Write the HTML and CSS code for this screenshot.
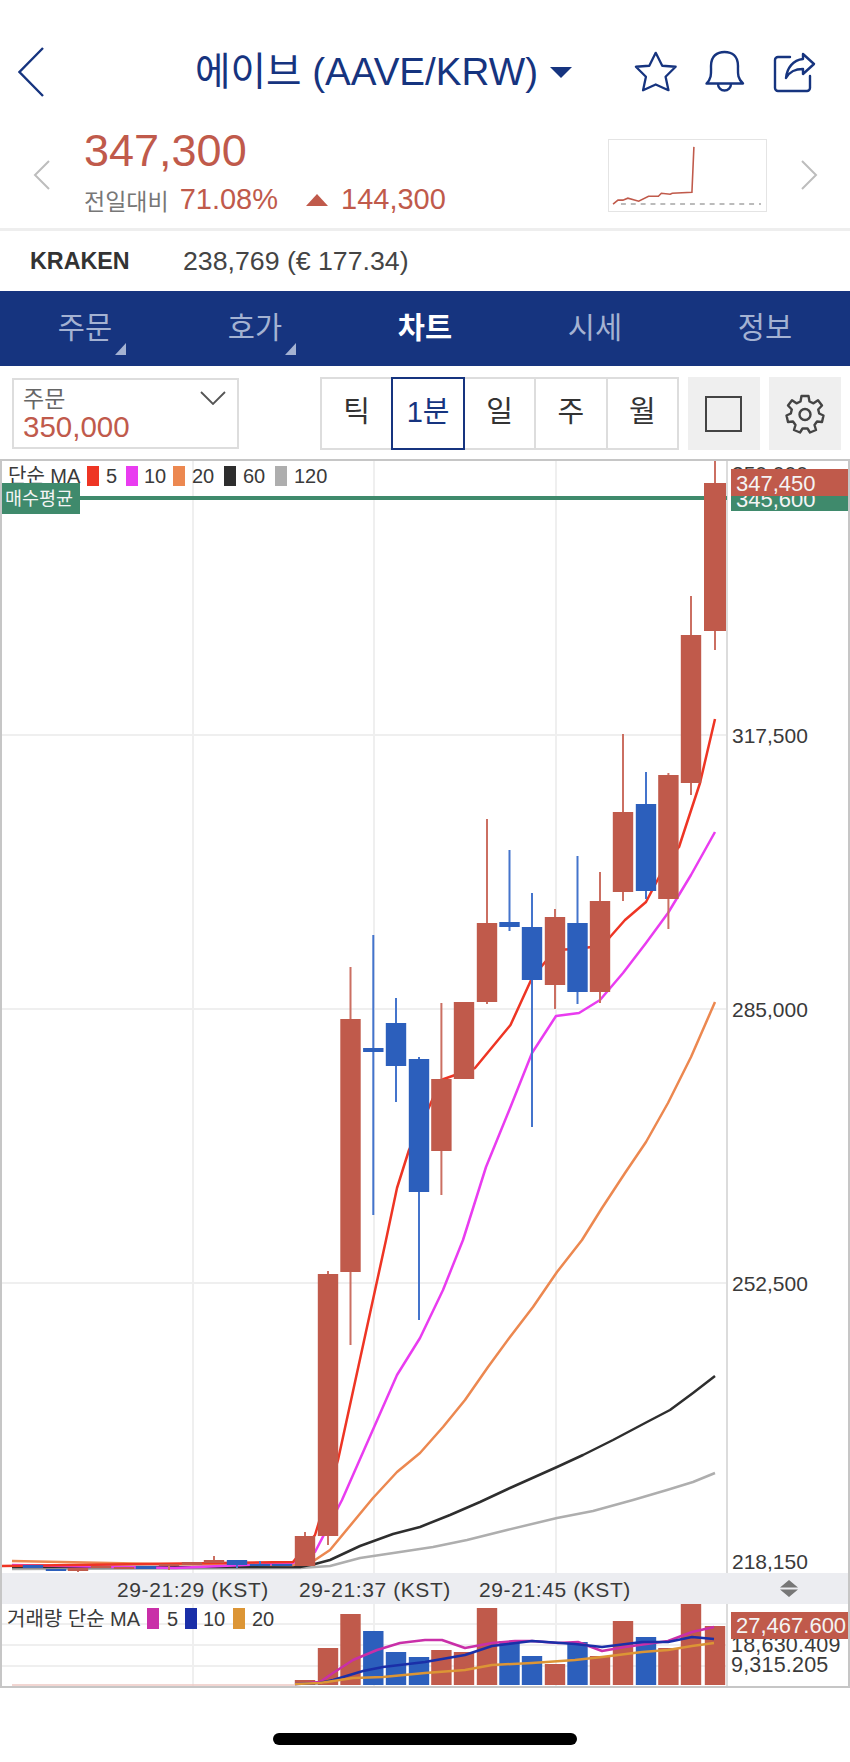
FILE: index.html
```html
<!DOCTYPE html>
<html lang="ko">
<head>
  <meta charset="UTF-8" />
  <meta name="viewport" content="width=device-width, initial-scale=1.0"/>
  <title>에이브 (AAVE/KRW)</title>
  <link rel="stylesheet" href="styles.css">
</head>
<body>
  <header class="top-bar">
    <svg class="back" viewBox="0 0 26 50"><path d="M25 1 L1.5 25 L25 49" /></svg>
    <h1 class="coin-title">에이브 (AAVE/KRW)</h1>
    <span class="title-caret"></span>
    <div class="top-icons">
      <svg class="top-icon" viewBox="8 8 48 44"><path d="M31.7 10 L38.5 23.5 L52.5 24.5 L42 35 L45 49 L31.7 43 L18.5 49 L21.5 35 L11 24.5 L25 23.5 Z" /></svg>
      <svg class="top-icon" viewBox="80 8 46 46"><path d="M84.5 42.5 C90 37 89 32 89 25 C89 15 95 11 102.5 11 C110 11 116 15 116 25 C116 32 115 37 121 42.5 Z M96 43 a6.5 6.5 0 0 0 13 0" /></svg>
      <svg class="top-icon" viewBox="146 8 46 46"><path d="M165 16 H153 a3 3 0 0 0 -3 3 V47 a3 3 0 0 0 3 3 H182 a3 3 0 0 0 3 -3 V35 M178 13 L189 23 L178 33 V28 C170 28 165 30 161 37 C162 27 168 19 178 18 Z" /></svg>
    </div>
  </header>

  <section class="quote">
    <svg class="side-arrow" viewBox="0 0 18 30"><path d="M16 1 L2 15 L16 29" /></svg>
    <div class="quote-main">
      <div class="quote-price">347,300</div>
      <div class="quote-change">
        <span class="change-label">전일대비</span>
        <span class="change-rate">71.08%</span>
        <span class="change-up"></span>
        <span class="change-diff">144,300</span>
      </div>
    </div>
    <svg class="spark" viewBox="608 139 159 72">
      <line class="spark-base" x1="620" y1="204" x2="762" y2="204" />
      <polyline class="spark-line" points="612,204 617,200 622,200 627,198 638,201 648,196 658,196 661,193 670,194 672,193 692,192 694,146" />
    </svg>
    <svg class="side-arrow side-arrow-right" viewBox="0 0 18 30"><path d="M2 1 L16 15 L2 29" /></svg>
  </section>

  <section class="exchange">
    <span class="exchange-name">KRAKEN</span>
    <span class="exchange-price">238,769 (€ 177.34)</span>
  </section>

  <nav class="tabs">
    <div class="tab tab-more">주문</div>
    <div class="tab tab-more">호가</div>
    <div class="tab tab-on">차트</div>
    <div class="tab">시세</div>
    <div class="tab">정보</div>
  </nav>

  <section class="toolbar">
    <div class="order-box">
      <div class="order-head">
        <span class="order-label">주문</span>
        <svg class="order-arrow" viewBox="0 0 26 14"><path d="M1 1 L13 13 L25 1" /></svg>
      </div>
      <div class="order-value">350,000</div>
    </div>
    <div class="periods">
      <div class="period">틱</div>
      <div class="period period-on">1분</div>
      <div class="period">일</div>
      <div class="period">주</div>
      <div class="period">월</div>
    </div>
    <div class="tool-btn"><span class="tool-square"></span></div>
    <div class="tool-btn">
      <svg class="tool-gear" viewBox="0 0 40 40">
        <path d="M16.5 2 H23.5 L24.5 7.5 L28.5 9.3 L33 6.2 L37 11.5 L33.2 15.5 L34.2 19.5 L38.5 21.5 L37 28 L32 27.5 L29.5 31 L31 36 L25 38.5 L22.5 34.5 H17.5 L15 38.5 L9 36 L10.5 31 L8 27.5 L3 28 L1.5 21.5 L5.8 19.5 L6.8 15.5 L3 11.5 L7 6.2 L11.5 9.3 L15.5 7.5 Z" />
        <circle cx="20" cy="20.5" r="5.5" />
      </svg>
    </div>
  </section>

  <div class="chart-box">
    <svg id="chart" class="chart" viewBox="2 461 846 1225"></svg>
  </div>

  <div class="home-wrap"><div class="home-bar"></div></div>

  <script src="chart.js"></script>
</body>
</html>
```

FILE: styles.css
```css
body {
  margin: 0;
  background: #fff;
  font-family: "Liberation Sans", "Noto Sans CJK KR", sans-serif;
  color: #333;
}

/* top bar */
.top-bar {
  display: flex;
  align-items: center;
  height: 64px;
  margin-top: 40px;
  padding-left: 18px;
  color: #16347f;
}
.back {
  width: 26px;
  height: 50px;
  fill: none;
  stroke: #16347f;
  stroke-width: 2.4;
}
.coin-title {
  margin: 0 0 0 151px;
  font-size: 38.6px;
  font-weight: normal;
  line-height: 48px;
  white-space: nowrap;
}
.title-caret {
  width: 0;
  height: 0;
  margin-left: 12px;
  border-left: 11px solid transparent;
  border-right: 11px solid transparent;
  border-top: 11px solid #16347f;
}
.top-icons {
  display: flex;
  gap: 23px;
  margin-left: auto;
  padding-right: 33px;
}
.top-icon {
  width: 46px;
  height: 46px;
  fill: none;
  stroke: #16347f;
  stroke-width: 2.4;
  stroke-linejoin: round;
  stroke-linecap: round;
}

/* price block */
.quote {
  display: flex;
  align-items: center;
  height: 106px;
  padding: 18px 32px 0 0;
}
.side-arrow {
  width: 18px;
  height: 30px;
  margin-left: 33px;
  fill: none;
  stroke: #bdbdbd;
  stroke-width: 2;
}
.quote-main {
  margin-left: 33px;
  margin-top: -9px;
}
.quote-price {
  font-size: 45px;
  line-height: 52px;
  color: #c05a4b;
}
.quote-change {
  display: flex;
  align-items: center;
  height: 34px;
  margin-top: 6px;
  color: #c05a4b;
  font-size: 29px;
}
.change-label {
  font-size: 23px;
  color: #777;
}
.change-rate {
  margin-left: 11px;
}
.change-up {
  width: 0;
  height: 0;
  margin-left: 28px;
  border-left: 11.5px solid transparent;
  border-right: 11.5px solid transparent;
  border-bottom: 12px solid #c05a4b;
}
.change-diff {
  margin-left: 13px;
}
.spark {
  box-sizing: border-box;
  width: 159px;
  height: 73px;
  margin-left: auto;
  border: 1.5px solid #e4e4e4;
}
.spark-base {
  stroke: #bbb;
  stroke-width: 2;
  stroke-dasharray: 5 5;
}
.spark-line {
  fill: none;
  stroke: #c05a4b;
  stroke-width: 1.6;
}

/* exchange row */
.exchange {
  display: flex;
  align-items: center;
  height: 60px;
  padding-left: 30px;
  border-top: 3px solid #eee;
}
.exchange-name {
  width: 153px;
  font-size: 23.3px;
  font-weight: bold;
}
.exchange-price {
  font-size: 26.7px;
  color: #444;
}

/* tabs */
.tabs {
  display: flex;
  height: 75px;
  background: #16347f;
}
.tab {
  position: relative;
  flex: 1;
  font-size: 29.5px;
  line-height: 74px;
  text-align: center;
  color: #a4b2d2;
}
.tab-on {
  font-weight: bold;
  color: #fff;
}
.tab-more::after {
  content: "";
  position: absolute;
  left: 115px;
  top: 52px;
  width: 0;
  height: 0;
  border-left: 11px solid transparent;
  border-bottom: 12px solid #a4b2d2;
}

/* toolbar */
.toolbar {
  display: flex;
  align-items: flex-start;
  height: 82px;
  padding: 11px 9px 0 12px;
}
.order-box {
  flex: none;
  box-sizing: border-box;
  width: 227px;
  height: 71px;
  margin-top: 1px;
  padding: 6px 9px;
  border: 2px solid #ddd;
}
.order-head {
  display: flex;
  justify-content: space-between;
  align-items: flex-start;
}
.order-label {
  font-size: 23px;
  line-height: 26px;
  color: #666;
}
.order-arrow {
  width: 26px;
  height: 14px;
  margin: 5px 2px 0 0;
  fill: none;
  stroke: #555;
  stroke-width: 1.8;
}
.order-value {
  font-size: 29.5px;
  line-height: 30px;
  color: #c05a4b;
}
.periods {
  display: flex;
  flex: none;
  margin-left: 83px;
}
.period {
  flex: none;
  box-sizing: border-box;
  width: 73.4px;
  height: 73px;
  margin-left: -2px;
  border: 2px solid #ddd;
  font-size: 29px;
  line-height: 67px;
  text-align: center;
  color: #333;
}
.period-on {
  position: relative;
  border-color: #16347f;
  color: #16347f;
}
.tool-btn {
  display: flex;
  flex: none;
  align-items: center;
  justify-content: center;
  width: 72px;
  height: 73px;
  margin-left: 9px;
  background: #efefef;
}
.tool-square {
  box-sizing: border-box;
  width: 37px;
  height: 36px;
  border: 2.5px solid #444;
}
.tool-gear {
  width: 40px;
  height: 40px;
  fill: none;
  stroke: #444;
  stroke-width: 2.4;
  stroke-linejoin: round;
}

/* chart */
.chart-box {
  box-sizing: border-box;
  height: 1229px;
  border: 2px solid #c6c6c6;
}
.chart {
  display: block;
  width: 846px;
  height: 1225px;
}
.chart text {
  font-family: "Liberation Sans", "Noto Sans CJK KR", sans-serif;
  fill: #3a3a3a;
}
.axis-text {
  font-size: 21px;
}
.time-text {
  font-size: 21px;
  letter-spacing: 0.6px;
}
.legend-text {
  font-size: 20px;
}
.vol-axis {
  font-size: 21.5px;
  letter-spacing: 0.2px;
}
.chart .tag-text {
  font-size: 22px;
  fill: #f4f4f4;
}
.chart .avg-text {
  font-size: 18.5px;
  fill: #f4f4f4;
}
.grid {
  stroke: #efefef;
  stroke-width: 2;
}
.axis-line {
  stroke: #dcdcdc;
  stroke-width: 2;
}
.time-strip {
  fill: #ecedf1;
}
.ma {
  fill: none;
  stroke-width: 2.5;
  stroke-linejoin: round;
}
.body-r, .bar-r, .tag-r { fill: #c05a4b; }
.body-b, .bar-b { fill: #2c5fbc; }
.wick-r { stroke: #cb6f62; stroke-width: 2; }
.wick-b { stroke: #4474cc; stroke-width: 2; }
.vol-base { stroke: #eec9c3; stroke-width: 1.5; }
.tag-g { fill: #3f8a6c; }
.avg-line { stroke: #3f8a6c; stroke-width: 4; }
.updown { fill: #777; }

/* home indicator */
.home-wrap {
  display: flex;
  justify-content: center;
  padding-top: 45px;
}
.home-bar {
  width: 304px;
  height: 12px;
  border-radius: 6px;
  background: #000;
}
```

FILE: chart.js
```js
// x, wick top, body top, body bottom, wick bottom, colour
const candles = [
  [33, 1565, 1565, 1568, 1568, "b"], [56, 1569, 1569, 1571, 1571, "b"],
  [78, 1568, 1568, 1571, 1572, "r"], [101, 1566, 1566, 1568, 1568, "r"],
  [124, 1567, 1567, 1569, 1569, "r"], [146, 1566, 1566, 1569, 1569, "b"],
  [169, 1564, 1564, 1566, 1570, "r"], [192, 1562, 1562, 1565, 1565, "r"],
  [214, 1556, 1560, 1563, 1563, "r"], [237, 1560, 1560, 1565, 1568, "b"],
  [260, 1561, 1564, 1566, 1566, "b"], [282, 1564, 1564, 1566, 1566, "b"],
  [305, 1532, 1536, 1566, 1566, "r"], [328, 1271, 1274, 1536, 1545, "r"],
  [350.5, 967, 1019, 1272, 1345, "r"], [373.3, 935, 1048, 1052, 1215, "b"],
  [396, 998, 1023, 1066, 1102, "b"], [419, 1057, 1059, 1192, 1320, "b"],
  [441.4, 1003, 1079, 1151, 1195, "r"], [464, 1002, 1002, 1079, 1079, "r"],
  [487, 819, 923, 1002, 1004, "r"], [509.5, 850, 922, 927, 931, "b"],
  [532, 893, 927, 980, 1127, "b"], [555, 909, 917, 985, 1009, "r"],
  [577.5, 856, 923, 992, 1004, "b"], [600, 872, 901, 992, 1003, "r"],
  [623, 734, 812, 892, 901, "r"], [646, 772, 804, 891, 899, "b"],
  [668.4, 773, 775, 899, 929, "r"], [691, 596, 635, 783, 795, "r"],
  [715, 461, 483, 631, 650, "r", 22]
];

const priceLines = [
  { color: "#aeaeae", pts: "12,1569 300,1568 330,1566 360,1558 400,1552 433,1547 467,1540 507,1530 557,1518 593,1511 633,1500 667,1490 693,1482 715,1473" },
  { color: "#2e2e2e", pts: "12,1567 300,1567 315,1564 330,1560 360,1546 393,1534 420,1527 450,1515 480,1502 510,1488 557,1467 583,1455 613,1440 647,1422 670,1410 693,1393 715,1376" },
  { color: "#ec8850", pts: "12,1561 159,1564 293,1565 315,1560 330,1550 373,1498 397,1472 420,1453 443,1427 465,1400 488,1367 510,1337 533,1307 557,1272 582,1240 602,1208 625,1173 646,1142 668,1103 691,1057 715,1002" },
  { color: "#e93cf0", pts: "12,1565 175,1568 293,1563 315,1552 342,1500 397,1375 420,1338 443,1290 463,1240 486,1167 510.5,1107 532,1053 556,1016 579,1013 600,1000 623,973 646,943 668,913 691,875 715,832" },
  { color: "#ee3524", pts: "2,1566 293,1562 315,1535 338,1460 386,1240 397,1188 409,1150 430,1105 441,1080 475,1068 510.5,1025 532,978 555,950 575,949 600,946 610,937 625,920 646,902 668,860 679,847 700,783 715,719" }
];

const volBars = [
  [305, 1680, "r"], [328, 1648, "r"], [350.5, 1614, "r"], [373.3, 1631, "b"],
  [396, 1652, "b"], [419, 1657, "b"], [441.4, 1650, "r"], [464, 1652, "r"],
  [487, 1608, "r"], [509.5, 1641, "b"], [532, 1656, "b"], [555, 1664, "r"],
  [577.5, 1642, "b"], [600, 1656, "r"], [623, 1621, "r"], [646, 1637, "b"],
  [668.4, 1648, "r"], [691, 1604, "r"], [715, 1626, "r"]
];

const volLines = [
  { color: "#c92fa8", pts: "295,1684 320,1682 333,1673 353,1660 377,1650 400,1643 425,1640 442,1640 465,1648 492,1643 515,1641 532,1641 558,1643 578,1642 602,1651 625,1647 668,1641 692,1632 714,1627" },
  { color: "#1a2fa8", pts: "295,1684 320,1683 333,1680 363,1671 383,1667 425,1662 465,1655 492,1646 532,1641 575,1644 602,1647 642,1642 668,1642 692,1637 714,1639" },
  { color: "#dc9535", pts: "295,1684 320,1683 353,1678 383,1677 425,1673 465,1670 492,1665 532,1663 575,1660 602,1657 642,1652 668,1650 692,1646 714,1643" }
];

const rect = (x, y, w, h, cls, fill) =>
  `<rect x="${x}" y="${y}" width="${w}" height="${h}"${cls ? ` class="${cls}"` : ""}${fill ? ` fill="${fill}"` : ""}/>`;
const text = (x, y, str, cls) => `<text x="${x}" y="${y}" class="${cls}">${str}</text>`;
const line = (x1, y1, x2, y2, cls) => `<line x1="${x1}" y1="${y1}" x2="${x2}" y2="${y2}" class="${cls}"/>`;
const poly = l => `<polyline class="ma" stroke="${l.color}" points="${l.pts}"/>`;

let out = "";

// grid
[193, 374, 556].forEach(x => { out += line(x, 461, x, 1686, "grid"); });
[735, 1009, 1283, 1624, 1645, 1666].forEach(y => { out += line(2, y, 727, y, "grid"); });
out += line(727, 461, 727, 1686, "axis-line");

// axis labels
out += text(732, 481, "350,000", "axis-text");
out += text(732, 742.5, "317,500", "axis-text");
out += text(732, 1017, "285,000", "axis-text");
out += text(732, 1291, "252,500", "axis-text");
out += text(732, 1569, "218,150", "axis-text");

// averaged buy price, then price MAs and candles on top
out += line(2, 498, 727, 498, "avg-line");
priceLines.forEach(l => { out += poly(l); });
candles.forEach(([x, wt, bt, bb, wb, c, w = 20.4]) => {
  out += line(x, wt, x, wb, `wick-${c}`);
  out += rect(x - w / 2, bt, w, bb - bt, `body-${c}`);
});

// tags on the right
out += rect(731, 496, 117, 15, "tag-g");
out += text(736, 507, "345,600", "tag-text");
out += rect(731, 469, 117, 27, "tag-r");
out += text(736, 491, "347,450", "tag-text");

// legend
out += text(8, 483, "단순 MA", "legend-text");
[[87, "#ee3524", 106, "5"], [126, "#e93cf0", 144, "10"], [173, "#ec8850", 192, "20"],
 [224, "#2e2e2e", 243, "60"], [275, "#aeaeae", 294, "120"]].forEach(([sx, col, tx, label]) => {
  out += rect(sx, 466, 12, 20, "", col);
  out += text(tx, 483, label, "legend-text");
});
out += rect(2, 483, 78, 31, "tag-g");
out += text(5, 505, "매수평균", "avg-text");

// time strip
out += rect(2, 1573, 846, 31, "time-strip");
out += text(117, 1597, "29-21:29 (KST)", "time-text");
out += text(299, 1597, "29-21:37 (KST)", "time-text");
out += text(479, 1597, "29-21:45 (KST)", "time-text");
out += `<path class="updown" d="M789 1580 L798 1587.5 H780 Z M780 1589.5 H798 L789 1597 Z"/>`;

// volume panel
volBars.forEach(([x, top, c]) => { out += rect(x - 10.2, top, 20.4, 1685 - top, `bar-${c}`); });
out += line(12, 1685, 295, 1685, "vol-base");
volLines.forEach(l => { out += poly(l); });
out += text(7, 1626, "거래량 단순 MA", "legend-text");
[[147, "#c92fa8", 167, "5"], [185, "#1a2fa8", 203, "10"], [233, "#dc9535", 252, "20"]].forEach(([sx, col, tx, label]) => {
  out += rect(sx, 1608, 12, 21, "", col);
  out += text(tx, 1626, label, "legend-text");
});
out += text(731, 1652, "18,630.409", "vol-axis");
out += text(731, 1672, "9,315.205", "vol-axis");
out += rect(731, 1612, 118, 27, "tag-r");
out += text(736, 1633, "27,467.600", "tag-text");

document.getElementById("chart").innerHTML = out;
```
